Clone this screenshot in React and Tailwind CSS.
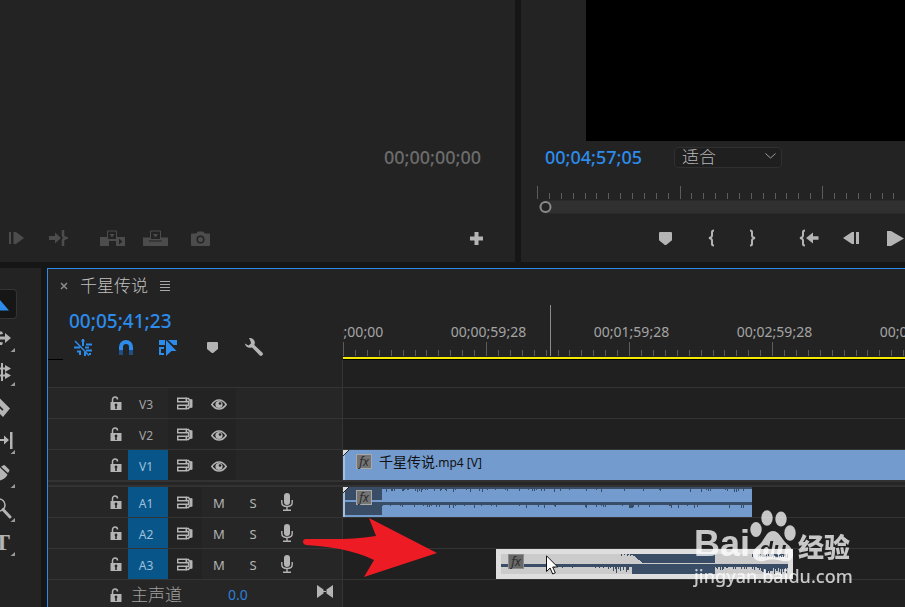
const TOOLS = [
  { id: 'select', label: 'Selection tool', active: true },
  { id: 'track', label: 'Track select tool', more: true },
  { id: 'ripple', label: 'Ripple edit tool', more: true },
  { id: 'razor', label: 'Razor tool' },
  { id: 'slip', label: 'Slip tool', more: true },
  { id: 'pen', label: 'Pen tool', more: true },
  { id: 'zoom', label: 'Zoom tool', more: true },
  { id: 'type', label: 'Type tool', more: true },
]

const RULER_LABELS = ['00;00;00;00', '00;00;59;28', '00;01;59;28', '00;02;59;28', '00;03;59;28', '00;04;59;29']

const VIDEO_TRACKS = [{ name: 'V3' }, { name: 'V2' }, { name: 'V1', on: true }]
const AUDIO_TRACKS = [{ name: 'A1', on: true }, { name: 'A2', on: true }, { name: 'A3', on: true }]

// Small repeatable noise so the wave forms look the same on every render
function noise(i) {
  const v = Math.sin(i * 12.9898) * 43758.5453
  return v - Math.floor(v)
}

// Row of one pixel wide spikes hanging down from y
function spikes(from, to, y, base, max, density) {
  let d = ''
  for (let x = from; x < to; x += 1) {
    const n = noise(x + y * 7)
    const h = n < density ? base + Math.round((n / density) * max) : base
    d += `M${x} ${y}h1v${h}h-1z`
  }
  return d
}

function Ticks({ step, height, minor, count }) {
  return (
    <svg className="block w-full" height={height} shapeRendering="crispEdges" fill="#5c5c5c">
      {Array.from({ length: count }, (_, i) => {
        const h = i % 12 === 0 ? height : minor
        return <rect key={i} x={Math.round(i * step)} y={height - h} width="1" height={h} />
      })}
    </svg>
  )
}

function ToolGlyph({ id }) {
  switch (id) {
    case 'select':
      return <path d="M-6 7L0 13l9 10.500H0z" fill="#2d8ceb" />
    case 'track':
      return <path d="M0 15.500h5V12l6 5-6 5v-3.500H0zM0 10.500h2l1 2.500-3 .5zM0 21l3 .5-1 2.500H0z" />
    case 'ripple':
      return <path d="M1 8h2v18H1zM0 12.500h5V10l6 3.500L5 17v-2.500H0zM0 19.500h5V17l6 3.500L5 24v-2.500H0z" />
    case 'razor':
      return <path fillRule="evenodd" d="M0 9.500L10 19.500 3 28l-3-3zM0 17l3.500 3.500-1 1.200L0 19.500z" />
    case 'slip':
      return <path d="M10 9h2.500v17H10zM0 16h4v-3.500l5 4.500-5 4.500V18H0z" />
    case 'pen':
      return <path fillRule="evenodd" d="M3 8.500q1-1 2 0l4 4q1 1 0 2L8 16 1 9.800zM0 10.500l7.500 7c-1 3-4 5-7.500 6z" />
    case 'zoom':
      return <path d="M3 18.500l7 7.500" stroke="#b4b4b4" strokeWidth="3" strokeLinecap="round" />
    default:
      return (
        <text x="2" y="25" textAnchor="middle" fontSize="24" fontWeight="700" fontFamily="Liberation Serif, serif">
          T
        </text>
      )
  }
}

function ToolBar() {
  return (
    <aside className="flex w-[41px] shrink-0 flex-col bg-[#232323] pt-[19px]">
      {TOOLS.map((t) => (
        <button
          key={t.id}
          aria-label={t.label}
          className={`flex h-[34px] w-[17px] items-center ${t.active ? 'py-0.5' : ''}`}
        >
          <span className={t.active ? 'block h-full w-full overflow-hidden rounded-r border border-l-0 border-[#343434] bg-[#161616]' : 'block'}>
            <svg width="16" height="34" viewBox={t.active ? '0 3 16 34' : '0 0 16 34'} fill="#b4b4b4">
              <ToolGlyph id={t.id} />
              {t.id === 'zoom' && <circle cx="-1" cy="14" r="6" fill="none" stroke="#b4b4b4" strokeWidth="1.500" />}
              {t.more && <path d="M15 27v4h-4.500z" fill="#9a9a9a" />}
            </svg>
          </span>
        </button>
      ))}
    </aside>
  )
}

function IconButton({ label, className = '', children }) {
  return (
    <button aria-label={label} className={`flex h-6 shrink-0 items-center justify-center ${className}`}>
      {children}
    </button>
  )
}

function MarkerIcon({ size = 12 }) {
  return (
    <svg width={size} height={size} viewBox="0 0 12 12" fill="#b4b4b4">
      <path d="M1 0h10q1 0 1 1v6.500L6 12.500 0 7.500V1q0-1 1-1z" />
    </svg>
  )
}

function SourceMonitor() {
  return (
    <section className="flex min-w-0 flex-col justify-end overflow-hidden bg-[#232323] pb-3">
      <div className="mb-[57px] pr-[34px] text-right text-lg leading-6 font-medium text-[#6c6c6c]">00;00;00;00</div>
      <div className="flex items-center pr-[31px] pl-2">
        <IconButton label="Play in to out">
          <svg width="16" height="12" viewBox="0 0 16 12" fill="#4c4c4c">
            <path d="M1 0h2v12H1zM5.500 0H8l8 6-8 6H5.500z" />
          </svg>
        </IconButton>
        <IconButton label="Go to out" className="ml-6">
          <svg width="20" height="16" viewBox="0 0 20 16" fill="#4c4c4c">
            <path d="M1 6h6V2.500L13 8l-6 5.500V10H1z" />
            <path d="M15 0v5.500q0 1.500 3 2.500-3 1-3 2.500V16" fill="none" stroke="#4c4c4c" strokeWidth="2.500" />
          </svg>
        </IconButton>
        <IconButton label="Insert" className="ml-8">
          <svg width="25" height="16" viewBox="0 0 25 16" fill="#4c4c4c">
            <path d="M0 7h16v4H9v5H0z" />
            <path fillRule="evenodd" d="M16 7h9v9h-9zM19 8.500v6l3.500-3z" />
            <path d="M7.500 1h9v8.500h-9z" fill="#232323" stroke="#4c4c4c" />
            <path d="M9.500 4h5L12 7.500z" />
          </svg>
        </IconButton>
        <IconButton label="Overwrite" className="ml-[18px]">
          <svg width="25" height="16" viewBox="0 0 25 16" fill="#4c4c4c">
            <path d="M0 7.500h25V16H0z" />
            <path d="M6 11h13" stroke="#232323" />
            <path d="M7.500 1h10v8.500h-10z" fill="#232323" stroke="#4c4c4c" />
            <path d="M10 4h5l-2.500 3.500z" />
          </svg>
        </IconButton>
        <IconButton label="Export frame" className="ml-[18px] w-7">
          <svg width="19" height="15" viewBox="0 0 19 15" fill="#4c4c4c">
            <path d="M1 2.500h4L7 .5h5l2 2h4q1 0 1 1V14q0 1-1 1H1q-1 0-1-1V3.500q0-1 1-1z" />
            <circle cx="9.500" cy="8.500" r="3.300" fill="none" stroke="#232323" strokeWidth="1.500" />
          </svg>
        </IconButton>
        <IconButton label="Add button" className="ml-auto">
          <svg width="15" height="15" viewBox="0 0 15 15" fill="#b4b4b4">
            <path d="M5.500 1h4v4.500H14v4H9.500V14h-4V9.500H1v-4h4.500z" />
          </svg>
        </IconButton>
      </div>
    </section>
  )
}

function Brace({ flip }) {
  return (
    <svg width="8" height="18" viewBox="0 0 8 18" fill="none" stroke="#b4b4b4" strokeWidth="2">
      <path d={flip ? 'M2 1.500q2 0 2 1.500v3.500q0 2 3 2.500-3 .5-3 2.500V15q0 1.500-2 1.500' : 'M6 1.500q-2 0-2 1.500v3.500q0 2-3 2.500 3 .5 3 2.500V15q0 1.500 2 1.500'} />
    </svg>
  )
}

function ProgramMonitor() {
  return (
    <section className="min-w-0 overflow-hidden bg-[#232323]">
      <div className="ml-[65px] h-[141px] bg-black" />
      <div className="flex h-8 items-center pl-6">
        <span className="w-[129px] text-lg leading-6 font-medium text-[#2d8ceb]">00;04;57;05</span>
        <div className="relative">
          <select
            aria-label="Zoom level"
            className="h-[21px] w-[108px] appearance-none rounded-sm border border-[#303030] bg-[#1f1f1f] pl-[7px] text-[17px] leading-4 font-light text-[#b8b8b8]"
          >
            <option>适合</option>
          </select>
          <svg className="pointer-events-none absolute top-2 right-1.5" width="11" height="6" fill="none" stroke="#a0a0a0">
            <path d="M.5.500l5 4.500 5-4.500" />
          </svg>
        </div>
      </div>
      <div className="mt-[13px] pl-4">
        <Ticks step={11.880} height={13} minor={6} count={80} />
      </div>
      <div className="mt-px ml-[18px] flex h-[14px] items-center rounded-l-full border-y border-[#292929] bg-[#303030]">
        <svg width="13" height="12" viewBox="0 0 13 12" fill="#232323" stroke="#8a8a8a" strokeWidth="2">
          <circle cx="6.500" cy="6" r="5" />
        </svg>
      </div>
      <div className="mt-3 flex items-center pl-[124px]">
        <IconButton label="Add marker" className="mr-[7px] w-10">
          <MarkerIcon size={13} />
        </IconButton>
        <IconButton label="Mark in" className="w-10">
          <Brace />
        </IconButton>
        <IconButton label="Mark out" className="mr-[15px] w-10">
          <Brace flip />
        </IconButton>
        <IconButton label="Go to in" className="w-[43px]">
          <svg width="20" height="18" viewBox="0 0 20 18" fill="#b4b4b4">
            <path d="M6 1.500q-2 0-2 1.500v3.500q0 2-3 2.500 3 .5 3 2.500V15q0 1.500 2 1.500" fill="none" stroke="#b4b4b4" strokeWidth="2" />
            <path d="M19.500 7.200H14V3.500L7 9l7 5.500v-3.700h5.500z" />
          </svg>
        </IconButton>
        <IconButton label="Step back" className="w-[42px]">
          <svg width="16" height="12" viewBox="0 0 16 12" fill="#b4b4b4">
            <path d="M13 0h3v12h-3zM11 0v12H9L0 6l9-6z" />
          </svg>
        </IconButton>
        <IconButton label="Play" className="ml-0.5 w-[43px]">
          <svg width="17" height="15" viewBox="0 0 17 15" fill="#b4b4b4">
            <path d="M0 0h4l13 7.500L4 15H0z" />
          </svg>
        </IconButton>
      </div>
    </section>
  )
}

function TimelineTools() {
  return (
    <div className="flex h-[17px] items-center">
      <button aria-label="Nest sequences" className="ml-[25px]">
        <svg width="20" height="17" viewBox="0 0 20 17" fill="none" stroke="#2d8ceb" strokeWidth="2">
          <path d="M2 2l14 14.500" strokeWidth="1.500" />
          <path d="M10 0v7M8.500 2h3M1 8.500h6M12 8.500h4M13 5.500h6M13 11.500h6M4 12.500h4M7 16v-3M12 13v4M17 14v2" />
        </svg>
      </button>
      <button aria-label="Snap" className="ml-[25px]">
        <svg width="16" height="17" viewBox="0 0 16 17" fill="none" strokeWidth="4">
          <path d="M3 11.500V8a5 5 0 0 1 10 0v3.500" stroke="#2d8ceb" />
          <path d="M3 11.500V16M13 11.500V16" stroke="#1d4f83" />
        </svg>
      </button>
      <button aria-label="Linked selection" className="ml-[25px]">
        <svg width="18" height="17" viewBox="0 0 18 17" fill="#2d8ceb">
          <path d="M0 1h6v5H0zM9 1h9v5h-3.500zM7 1l10.500 11h-5L7 17zM0 8h5v2H2v4h3v2H0z" />
        </svg>
      </button>
      <button aria-label="Add marker" className="ml-[30px]">
        <MarkerIcon size={11} />
      </button>
      <button aria-label="Timeline settings" className="ml-[26px]">
        <svg width="20" height="19" viewBox="0 0 20 19" fill="#b4b4b4">
          <path d="M5 0q4-.5 5.500 3 .8 2-.2 4l8.200 7.800q1 1.200-.2 2.500-1.200 1.200-2.500.2L8 9.500Q2.500 11 .8 5.500L4.500 7.500 7 5.500 6.500 3z" />
        </svg>
      </button>
    </div>
  )
}

function LockIcon() {
  return (
    <svg width="12" height="14" viewBox="0 0 12 14" fill="#b4b4b4">
      <path d="M2.500 6V3.500a2.500 2.500 0 0 1 5 0" fill="none" stroke="#b4b4b4" strokeWidth="1.500" />
      <path fillRule="evenodd" d="M.5 6h11v8H.5zM6 7.500a1.500 1.500 0 0 0-.8 2.700V13h1.600v-2.800A1.500 1.500 0 0 0 6 7.500z" />
    </svg>
  )
}

function SyncIcon() {
  return (
    <svg width="16" height="13" viewBox="0 0 16 13" fill="none" stroke="#b4b4b4" strokeWidth="1.500">
      <path d="M.7 1.200h8.600v3.600H.7zM.7 8.200h8.600v3.600H.7z" />
      <path d="M9 1.500h2.500l1 1.500H14v7h-1.500l-1 1.500H9M9 4.500h2.500v4H9" />
      <path d="M14 2.500v8" strokeWidth="3" />
    </svg>
  )
}

function EyeIcon() {
  return (
    <svg width="16" height="11" viewBox="0 0 16 11">
      <path d="M.8 5.500Q4 1 8 1t7.200 4.500Q12 10 8 10T.8 5.500z" fill="none" stroke="#b4b4b4" strokeWidth="1.600" />
      <circle cx="8" cy="5.500" r="3.600" fill="#b4b4b4" />
      <circle cx="9" cy="4.500" r="1.300" fill="#232323" />
    </svg>
  )
}

function MicIcon() {
  return (
    <svg width="12" height="18" viewBox="0 0 12 18" fill="#b4b4b4">
      <rect x="3" y="0" width="6" height="12" rx="3" />
      <path d="M.8 7v2.500q0 4 5.200 4t5.200-4V7M6 13v4M2 17.200h8" fill="none" stroke="#b4b4b4" strokeWidth="1.400" />
    </svg>
  )
}

function Track({ track, audio, last, children }) {
  const cell = 'flex w-[34px] items-center justify-center'
  return (
    <div className={`flex shrink-0 border-[#343434] ${last ? 'h-[30px]' : 'h-[31px] border-b'}`}>
      <div className="flex w-[295px] shrink-0 border-r border-[#343434] bg-[#262626] text-[#b4b4b4]">
        <button aria-label={`Lock ${track.name}`} className="ml-14 flex w-6 items-center justify-center">
          <LockIcon />
        </button>
        <button className={`w-10 pt-1 pr-1 text-center text-xs ${track.on ? 'bg-[#085689] text-[#9fc0da]' : 'text-[#a4a4a4]'}`}>
          {track.name}
        </button>
        <button aria-label="Sync lock" className={`${cell} bg-[#232323]`}>
          <SyncIcon />
        </button>
        {audio ? (
          <>
            <button className={`${cell} pt-1 text-[13px]`}>M</button>
            <button className={`${cell} pt-1 text-[13px]`}>S</button>
            <button aria-label="Voice-over record" className={cell}>
              <MicIcon />
            </button>
          </>
        ) : (
          <button aria-label="Toggle track output" className={`${cell} bg-[#232323] pt-0.5`}>
            <EyeIcon />
          </button>
        )}
      </div>
      <div className="flex min-w-0 flex-1 overflow-hidden">{children}</div>
    </div>
  )
}

function FxBadge({ className = '' }) {
  return (
    <span className={`flex h-[15px] w-4 items-center justify-center border text-xs leading-none italic ${className}`}>fx</span>
  )
}

function ClipEdge() {
  return (
    <svg className="absolute top-0 left-0" width="6" height="30">
      <path d="M0 0h2v30H0z" fill="#a6bfe0" />
      <path d="M0 0h6L0 6z" fill="#dcdcdc" />
      <path d="M6 0L0 6" stroke="#222" />
    </svg>
  )
}

function VideoClip() {
  return (
    <div className="relative flex h-[30px] w-full bg-[#739bcd] pt-1 pl-[13px]">
      <ClipEdge />
      <FxBadge className="border-[#a8a8a8] bg-[#747474] text-[#2c2c2c]" />
      <span className="ml-[7px] text-sm leading-4 whitespace-nowrap text-[#111]">
        千星传说<span className="text-xs">.mp4 [V]</span>
      </span>
    </div>
  )
}

function AudioClip() {
  return (
    <div className="relative flex h-[30px] w-[409px] bg-[#739bcd] pt-[3px] pl-[13px]">
      <svg className="absolute inset-0" width="409" height="30" fill="#3a4d66" shapeRendering="crispEdges">
        <path d="M0 0h39v13H0zM0 15h39v13H0z" />
        <path d={spikes(39, 409, 0, 2, 3, 0.22)} />
        <path d={spikes(39, 409, 15, 3, 3, 0.25)} />
      </svg>
      <ClipEdge />
      <FxBadge className="relative border-[#a8a8a8] bg-[#747474] text-[#2c2c2c]" />
    </div>
  )
}

function SelectedClip() {
  return (
    <div className="relative ml-[153px] flex h-[30px] w-[297px] bg-[#dedede] pt-[5px] pl-3">
      <svg className="absolute top-[5px] left-[5px]" width="287" height="20" fill="#3a4d66" shapeRendering="crispEdges">
        <path d="M0 0h287v20H0z" fill="#cbcbcb" />
        <path d="M0 10h287v3H0z" />
        <path d="M127 0h87v9h-72l-4-3-5-4zM131 10h83v10h-83z" />
        <path d={spikes(40, 105, 13, 0, 1, 0.15)} />
        <path d={spikes(106, 131, 12, 1, 6, 0.5)} />
        <path d={spikes(119, 130, 0, 0, 3, 0.5)} />
        <path d={spikes(214, 262, 13, 0, 3, 0.5)} />
        <path d={spikes(250, 287, 0, 0, 5, 0.6)} />
        <path d={spikes(258, 287, 12, 2, 6, 0.8)} />
      </svg>
      <FxBadge className="relative border-[#8c8c8c] bg-[#686868] text-[#2c2c2c]" />
    </div>
  )
}

function Watermark() {
  return (
    <div className="pointer-events-none absolute top-[241px] left-[646px] opacity-75">
      <div className="flex h-[54px] items-end text-white">
        <span className="w-[55px] font-['Liberation_Sans',Arial,sans-serif] text-[36px] leading-[40px] font-bold">Bai</span>
        <svg width="49" height="54" viewBox="0 0 49 54" fill="#fff">
          <ellipse cx="7" cy="19.500" rx="5.700" ry="7.500" />
          <ellipse cx="18" cy="8" rx="5.700" ry="7.800" />
          <ellipse cx="32" cy="9" rx="5.700" ry="7.500" />
          <ellipse cx="41" cy="23" rx="5.700" ry="7.700" />
          <mask id="du">
            <path d="M0 0h49v54H0z" fill="#fff" />
            <text x="24" y="47" textAnchor="middle" fontSize="22" fontWeight="700" fontStyle="italic" fontFamily="Liberation Sans, sans-serif" fill="#000">
              du
            </text>
          </mask>
          <path mask="url(#du)" d="M24 21c6 0 8 7 13 12 5 4 7 7 7 12-1 6-6 7-11 6-6-2-13-2-18 0-7 1-11-2-11-7s4-7 8-11c4-5 6-12 12-12z" />
        </svg>
        <span className="text-[26px] leading-[34px] font-black">经验</span>
      </div>
      <div className="text-lg leading-6 font-medium whitespace-nowrap text-white">jingyan.baidu.com</div>
    </div>
  )
}

function Timeline() {
  return (
    <section className="relative flex min-w-0 flex-1 flex-col overflow-hidden border-t border-l border-[#2d8ceb] bg-[#202020]">
      <div className="h-[91px] shrink-0 bg-[#232323]">
        <div className="flex h-[34px] items-center pl-3">
          <button aria-label="Close sequence">
            <svg width="8" height="8" viewBox="0 0 8 8" stroke="#8c8c8c" strokeWidth="1.500">
              <path d="M1 1l6 6M7 1L1 7" />
            </svg>
          </button>
          <span className="ml-3 text-[17px] leading-6 font-light text-[#c0c0c0]">千星传说</span>
          <button aria-label="Panel menu" className="ml-3">
            <svg width="10" height="10" fill="#a8a8a8" shapeRendering="crispEdges">
              <path d="M0 0h10v1H0zM0 3h10v1H0zM0 6h10v1H0zM0 9h10v1H0z" />
            </svg>
          </button>
        </div>
        <div className="flex">
          <div className="w-[295px] shrink-0">
            <div className="flex h-9 items-center pl-[21px] text-[19px] leading-6 font-medium text-[#2d8ceb]">00;05;41;23</div>
            <TimelineTools />
            <div className="mt-[3px] h-px w-[15px] bg-black" />
          </div>
          <div className="relative min-w-0 flex-1 overflow-hidden">
            <div className="-ml-[69px] flex h-[39px] items-end text-sm leading-5 text-[#a4a4a4]">
              {RULER_LABELS.map((l) => (
                <span key={l} className="w-[143px] shrink-0 text-center">
                  {l}
                </span>
              ))}
            </div>
            <Ticks step={11.920} height={14} minor={6} count={120} />
            <div className="mt-px h-[3px] border-b border-black bg-[#f2ea00]" />
            <div className="absolute top-0.5 left-[207px] h-[51px] w-px bg-[#8a8a8a]" />
          </div>
        </div>
      </div>

      <div className="flex h-7 shrink-0 border-b border-[#343434]">
        <div className="w-[295px] border-r border-[#343434] bg-[#232323]" />
      </div>
      <Track track={VIDEO_TRACKS[0]} />
      <Track track={VIDEO_TRACKS[1]} />
      <Track track={VIDEO_TRACKS[2]} last>
        <VideoClip />
      </Track>
      <div className="h-[7px] shrink-0 border-y-2 border-[#323232] bg-[#262626]" />
      <Track track={AUDIO_TRACKS[0]} audio>
        <AudioClip />
      </Track>
      <Track track={AUDIO_TRACKS[1]} audio />
      <Track track={AUDIO_TRACKS[2]} audio>
        <SelectedClip />
      </Track>
      <div className="flex min-h-0 flex-1">
        <div className="flex w-[295px] shrink-0 border-r border-[#343434] bg-[#262626]">
          <div className="flex h-[30px] items-center">
            <button aria-label="Lock master" className="ml-14 flex w-6 items-center justify-center">
              <LockIcon />
            </button>
            <span className="ml-[3px] w-[97px] text-[17px] leading-6 font-light text-[#a0a0a0]">主声道</span>
            <span className="w-[89px] text-sm text-[#2d7fd8]">0.0</span>
            <svg className="mb-2" width="16" height="13" viewBox="0 0 16 13" fill="#b4b4b4">
              <path d="M0 0l6.500 4.500v4L0 13zM16 0L9.500 4.500v4L16 13zM6 6h4v1H6z" />
            </svg>
          </div>
        </div>
      </div>

      <svg className="pointer-events-none absolute top-[248px] left-[255px]" width="134" height="61" fill="#ed1c24">
        <path d="M3 22C30 22 50 23 73 19L66 1l68 35-73 24 10-17C50 33 30 30 3 28c-4-1-4-6 0-6z" />
      </svg>
      <Watermark />
      <svg className="pointer-events-none absolute top-[286px] left-[498px]" width="13" height="20" viewBox="0 0 13 20">
        <path d="M.5.800v15.700l3.600-3.500 2.600 6 2.600-1.100-2.600-5.900h5z" fill="#fff" stroke="#111" />
      </svg>
    </section>
  )
}

export default function App() {
  return (
    <div className="flex h-screen flex-col gap-1.5 overflow-hidden bg-[#161616] font-['Noto_Sans','Noto_Sans_CJK_SC',sans-serif]">
      <div className="grid h-[262px] shrink-0 grid-cols-[515fr_384fr] gap-1.5">
        <SourceMonitor />
        <ProgramMonitor />
      </div>
      <div className="flex min-h-0 flex-1 gap-1.5">
        <ToolBar />
        <Timeline />
      </div>
    </div>
  )
}
